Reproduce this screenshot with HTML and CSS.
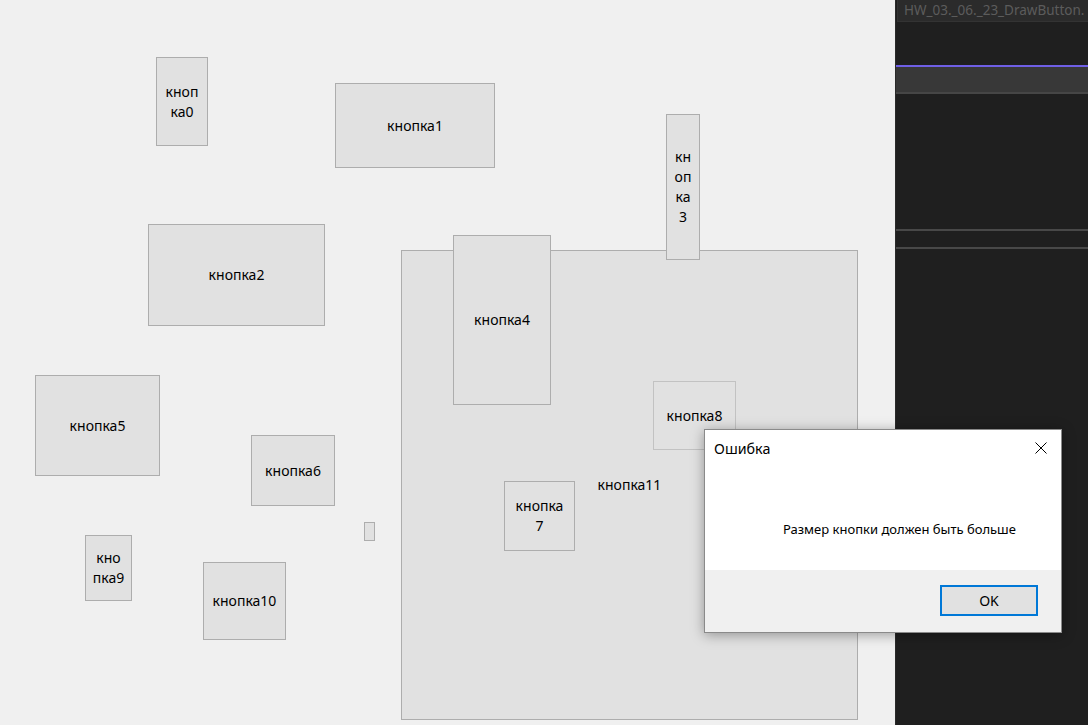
FILE: index.html
```html
<!DOCTYPE html>
<html lang="ru">
<head>
<meta charset="utf-8">
<title>DrawButton</title>
<link rel="stylesheet" href="styles.css">
</head>
<body>
<div class="screen">
  <main class="form">
    <button class="btn b11">кнопка11</button>
    <button class="btn b0">кноп<br>ка0</button>
    <button class="btn b1">кнопка1</button>
    <button class="btn b2">кнопка2</button>
    <button class="btn b3">кн<br>оп<br>ка<br>3</button>
    <button class="btn b4">кнопка4</button>
    <button class="btn b5">кнопка5</button>
    <button class="btn b6">кнопка6</button>
    <button class="btn b7">кнопка<br>7</button>
    <button class="btn b8">кнопка8</button>
    <button class="btn b9">кно<br>пка9</button>
    <button class="btn b10">кнопка10</button>
    <button class="btn b12"></button>
  </main>
  <aside class="ide">
    <div class="ide-tab">HW_03._06._23_DrawButton.</div>
    <div class="ide-gap"></div>
    <div class="ide-accent"></div>
    <div class="ide-band"></div>
    <div class="ide-area"></div>
    <div class="ide-rule"></div>
    <div class="ide-strip"></div>
    <div class="ide-rule"></div>
  </aside>
  <div class="dialog">
    <div class="dialog-body">
      <div class="dialog-title">
        <span>Ошибка</span>
        <svg class="close" width="12" height="12" viewBox="0 0 12 12"><path d="M0.5 0.5L11.5 11.5M11.5 0.5L0.5 11.5" stroke="#000" stroke-width="1" fill="none"/></svg>
      </div>
      <div class="dialog-msg">Размер кнопки должен быть больше</div>
    </div>
    <div class="dialog-foot">
      <button class="ok">OK</button>
    </div>
  </div>
</div>
</body>
</html>
```
FILE: styles.css
```css
* { box-sizing: border-box; }
html, body { margin: 0; padding: 0; }
body {
  width: 1088px;
  height: 725px;
  overflow: hidden;
  font-family: "Noto Sans", "Liberation Sans", sans-serif;
  font-size: 14px;
  background: #f0f0f0;
}
.screen {
  position: relative;
  display: flex;
  width: 1088px;
  height: 725px;
}
.form {
  position: relative;
  flex: 0 0 895px;
  height: 725px;
  background: #f0f0f0;
}
.btn {
  position: absolute;
  display: flex;
  align-items: center;
  justify-content: center;
  margin: 0;
  padding: 0;
  background: #e1e1e1;
  border: 1px solid #adadad;
  font-family: inherit;
  font-size: 14px;
  line-height: 20px;
  color: #000;
  text-align: center;
}
.b0 { left: 156px; top: 57px; width: 52px; height: 89px; }
.b1 { left: 335px; top: 83px; width: 160px; height: 85px; }
.b2 { left: 148px; top: 224px; width: 177px; height: 102px; }
.b3 { left: 666px; top: 114px; width: 34px; height: 146px; }
.b4 { left: 453px; top: 235px; width: 98px; height: 170px; }
.b5 { left: 35px; top: 375px; width: 125px; height: 101px; }
.b6 { left: 251px; top: 435px; width: 84px; height: 71px; }
.b7 { left: 504px; top: 481px; width: 71px; height: 70px; }
.b8 { left: 653px; top: 381px; width: 83px; height: 69px; border-color: #c2c2c2; }
.b9 { left: 85px; top: 535px; width: 47px; height: 66px; }
.b10 { left: 203px; top: 562px; width: 83px; height: 78px; }
.b11 { left: 401px; top: 250px; width: 457px; height: 470px; }
.b12 { left: 364px; top: 522px; width: 11px; height: 19px; }

.ide {
  flex: 1;
  display: flex;
  flex-direction: column;
  height: 725px;
  background: #1f1f1f;
  border-left: 1px solid #2a2a2a;
}
.ide-tab {
  height: 22px;
  margin-left: 1px;
  padding-left: 6px;
  background: #2b2b2b;
  border-left: 1px solid #333;
  border-bottom: 1px solid #333;
  color: #5c5c5c;
  font-size: 13.5px;
  line-height: 20px;
  white-space: nowrap;
  overflow: hidden;
}
.ide-gap { height: 43px; }
.ide-accent { height: 2px; background: #6f5fe6; }
.ide-band { height: 25px; background: #383838; }
.ide-area { height: 137px; border-top: 2px solid #464646; }
.ide-rule { height: 2px; background: #484848; }
.ide-strip { height: 16px; }

.dialog {
  position: absolute;
  left: 704px;
  top: 429px;
  width: 358px;
  height: 204px;
  display: flex;
  flex-direction: column;
  background: #fff;
  border: 1px solid #8a8a8a;
  box-shadow: 0 2px 12px rgba(0,0,0,0.35);
}
.dialog-body {
  flex: 0 0 140px;
  display: flex;
  flex-direction: column;
  background: #fff;
}
.dialog-title {
  display: flex;
  align-items: center;
  justify-content: space-between;
  height: 36px;
  padding: 0 14px 0 9px;
  font-size: 14.3px;
  color: #000;
}
.dialog-msg {
  flex: 1;
  display: flex;
  align-items: center;
  padding: 22px 0 0 78px;
  font-size: 13px;
}
.dialog-foot {
  flex: 1;
  display: flex;
  justify-content: flex-end;
  align-items: flex-start;
  padding: 15px 23px 0 0;
  background: #f0f0f0;
}
.ok {
  width: 98px;
  height: 31px;
  margin: 0;
  background: #e1e1e1;
  border: 2px solid #0078d7;
  font-family: inherit;
  font-size: 14px;
  color: #000;
}
```
